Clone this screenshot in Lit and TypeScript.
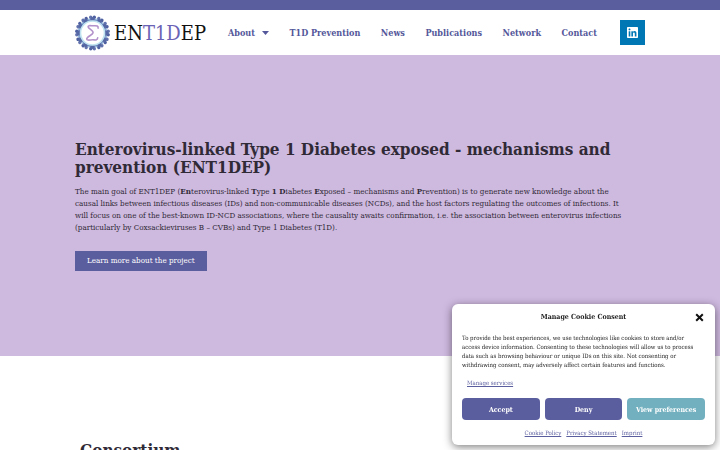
import { LitElement, html, css, svg } from "lit";
import { customElement } from "lit/decorators.js";

const links = ["T1D Prevention", "News", "Publications", "Network", "Contact"];
const petals = Array.from({ length: 12 }, (_, i) => i * 30);

@customElement("ent-logo")
class EntLogo extends LitElement {
  static styles = css`
    :host { display: block; }
    .logo { display: flex; align-items: center; gap: 3px; color: #111; text-decoration: none; font-size: 20px; line-height: 24px; white-space: nowrap; }
    .mark { width: 36px; height: 36px; flex: none; }
    .accent { color: #6a62b5; }
  `;
  render() {
    return html`<a class="logo" href="#">
      <svg class="mark" viewBox="0.5 0 36 36" aria-hidden="true">
        <circle cx="18" cy="18" r="13.4" fill="#fff" stroke="#6f86bd" stroke-width="2.4" />
        ${petals.map(
          (a) => svg`<g transform="rotate(${a} 18 18)">
            <circle cx="16.2" cy="2.3" r="1.7" fill="#6273ae" />
            <circle cx="19.8" cy="2.3" r="1.7" fill="#4f60a0" />
            <circle cx="18" cy="4" r="2" fill="#5568a5" />
            <circle cx="21.8" cy="4.4" r="0.9" fill="#9cc4e2" />
          </g>`,
        )}
        <circle cx="18" cy="18" r="12" fill="#fff" stroke="#bfe3f0" stroke-width="1.6" />
        <path d="M23.6 13.2 C24 10.2 21.4 10.8 19 10.8 C16.4 10.8 13.4 10 13.6 11.8 C14 13.8 18.8 15.4 18.6 17.6 C18.4 20 12 21.6 12.2 24 C12.4 26 16.4 24.6 18.8 24.8 C21 25 23 25.4 23.2 22.8" fill="none" stroke="#b391cb" stroke-width="1.6" stroke-linecap="round" />
      </svg>
      <span>EN<span class="accent">T1D</span>EP</span>
    </a>`;
  }
}

@customElement("cookie-dialog")
class CookieDialog extends LitElement {
  static styles = css`
    :host { display: block; position: fixed; right: 5px; bottom: 5px; width: 263px; max-width: calc(100% - 10px); }
    .box { box-sizing: border-box; padding: 7px 10px 8px; background: #fff; border-radius: 6px; box-shadow: 0 2px 8px rgba(0, 0, 0, 0.5); color: #222; font-size: 6px; line-height: 9px; }
    .head { display: grid; grid-template-columns: 12px 1fr 12px; align-items: center; height: 12px; }
    .title { grid-column: 2; margin: 0; font-size: 7px; font-weight: 600; line-height: 12px; text-align: center; }
    button { font-family: inherit; border: 0; padding: 0; cursor: pointer; }
    .close { display: flex; justify-content: center; background: none; }
    .close svg { width: 9px; height: 9px; }
    .text { margin: 10px 0 9px; white-space: nowrap; }
    a { color: #5b5e9e; }
    .services { margin-left: 5px; }
    .actions { display: grid; grid-template-columns: repeat(3, 1fr); gap: 5px; margin: 11px 0 8px; }
    .action { height: 22px; border-radius: 4px; background: #5b5e9e; color: #fff; font-size: 7px; font-weight: 700; white-space: nowrap; }
    .preferences { background: #72b0bf; }
    .policies { display: flex; justify-content: center; gap: 5px; }
  `;
  render() {
    return html`<section class="box" role="dialog" aria-labelledby="title">
      <div class="head">
        <h2 class="title" id="title">Manage Cookie Consent</h2>
        <button class="close" aria-label="Close">
          <svg viewBox="0 0 9 9"><path d="M1.2 1.2 L7.8 7.8 M7.8 1.2 L1.2 7.8" stroke="#111" stroke-width="2" /></svg>
        </button>
      </div>
      <p class="text">
        To provide the best experiences, we use technologies like cookies to store and/or<br />
        access device information. Consenting to these technologies will allow us to process<br />
        data such as browsing behaviour or unique IDs on this site. Not consenting or<br />
        withdrawing consent, may adversely affect certain features and functions.
      </p>
      <a class="services" href="#">Manage services</a>
      <div class="actions">
        <button class="action">Accept</button>
        <button class="action">Deny</button>
        <button class="action preferences">View preferences</button>
      </div>
      <div class="policies">
        <a href="#">Cookie Policy</a><a href="#">Privacy Statement</a><a href="#">Imprint</a>
      </div>
    </section>`;
  }
}

@customElement("app-root")
class AppRoot extends LitElement {
  static styles = css`
    :host { display: block; height: 100vh; overflow: hidden; background: #fff; color: #302a36; font-family: "Roboto Slab", "DejaVu Serif Condensed", "DejaVu Serif", serif; font-size: 8px; line-height: 12px; }
    .container { box-sizing: border-box; width: 100%; max-width: 570px; margin: 0 auto; }
    .top { height: 10px; background: #5b5e9e; }
    .header { display: flex; align-items: center; height: 45px; }
    .nav { display: flex; flex: 1; justify-content: space-between; margin: 0 23px 0 22px; font-size: 9px; font-weight: 600; white-space: nowrap; }
    .nav a { display: flex; align-items: center; gap: 7px; color: #54579a; text-decoration: none; }
    .caret { width: 7px; height: 4px; }
    .linkedin { display: flex; align-items: center; justify-content: center; width: 25px; height: 25px; background: #0077b5; }
    .linkedin svg { width: 11px; height: 11px; }
    .hero { padding: 85px 0; background: #ceb9df; }
    h1, h2 { margin: 0; font-size: 17px; font-weight: 600; line-height: 18px; }
    h1 { white-space: nowrap; }
    .intro { margin: 9px 0 17px; white-space: nowrap; }
    .more { display: inline-block; padding: 4px 12px; background: #5b5e9e; color: #fff; text-decoration: none; }
    .consortium { padding: 85px 5px 0; }
  `;
  render() {
    return html`
      <div class="top"></div>
      <header class="container header">
        <ent-logo></ent-logo>
        <nav class="nav">
          <a href="#">About <svg class="caret" viewBox="0 0 7 4" aria-hidden="true"><path d="M0 0 H7 L3.5 4 Z" fill="#54579a" /></svg></a>
          ${links.map((l) => html`<a href="#">${l}</a>`)}
        </nav>
        <a class="linkedin" href="#" aria-label="LinkedIn">
          <svg viewBox="0 0 448 448"><path fill="#fff" d="M416 0H31.900C14.300 0 0 14.500 0 32.300v383.400C0 433.500 14.300 448 31.900 448H416c17.600 0 32-14.500 32-32.300V32.300C448 14.500 433.600 0 416 0zM135.400 384H69V170.200h66.500V384zM102.200 141c-21.300 0-38.500-17.300-38.500-38.500S80.900 64 102.200 64c21.200 0 38.500 17.300 38.500 38.500 0 21.300-17.200 38.500-38.500 38.500zm282.100 243h-66.400V280c0-24.800-.5-56.700-34.500-56.700-34.600 0-39.900 27-39.900 54.900V384h-66.400V170.200h63.700v29.200h.9c8.900-16.800 30.600-34.500 62.900-34.500 67.200 0 79.700 44.300 79.700 101.900V384z" /></svg>
        </a>
      </header>
      <main>
        <section class="hero">
          <div class="container">
            <h1>Enterovirus-linked Type 1 Diabetes exposed - mechanisms and<br />prevention (ENT1DEP)</h1>
            <p class="intro">
              The main goal of ENT1DEP (<b>En</b>terovirus-linked <b>T</b>ype <b>1 D</b>iabetes <b>E</b>xposed – mechanisms and <b>P</b>revention) is to generate new knowledge about the<br />
              causal links between infectious diseases (IDs) and non-communicable diseases (NCDs), and the host factors regulating the outcomes of infections. It<br />
              will focus on one of the best-known ID-NCD associations, where the causality awaits confirmation, i.e. the association between enterovirus infections<br />
              (particularly by Coxsackieviruses B – CVBs) and Type 1 Diabetes (T1D).
            </p>
            <a class="more" href="#">Learn more about the project</a>
          </div>
        </section>
        <section class="container consortium"><h2>Consortium</h2></section>
      </main>
      <cookie-dialog></cookie-dialog>
    `;
  }
}
